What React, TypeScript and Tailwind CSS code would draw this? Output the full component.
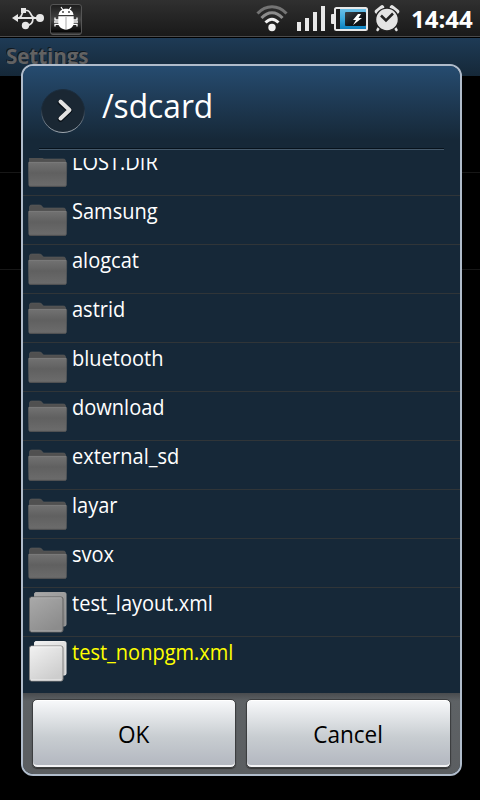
const folders = ['LOST.DIR', 'Samsung', 'alogcat', 'astrid', 'bluetooth', 'download', 'external_sd', 'layar', 'svox'];

function UsbIcon() {
  return (
    <svg width="34" height="24" viewBox="0 0 34 24" fill="none" stroke="#e6e6e6" strokeWidth="1.7">
      <path d="M5 12H29" strokeWidth="2" />
      <path d="M7.500 12C12 12 10 4.500 14 4.500M15 19.500C19.500 19.500 22 17 22 12M13 4.500H16C20.500 4.500 19 12 24.500 12" />
      <path d="M1 12L7 8V16Z" fill="#e6e6e6" stroke="none" />
      <rect x="10" y="2" width="5" height="5" fill="#e6e6e6" stroke="none" />
      <circle cx="14.500" cy="19.500" r="3.700" fill="#e6e6e6" stroke="none" />
      <circle cx="29" cy="12" r="4" fill="#e6e6e6" stroke="none" />
    </svg>
  );
}

function BugIcon() {
  return (
    <svg width="32" height="31" viewBox="0 0 32 31">
      <defs>
        <linearGradient id="bug" x1="0" y1="0" x2="0" y2="1">
          <stop offset="0" stopColor="#1c1c1c" />
          <stop offset=".5" stopColor="#444" />
          <stop offset=".9" stopColor="#080808" />
          <stop offset="1" stopColor="#555" />
        </linearGradient>
      </defs>
      <rect x=".5" y=".5" width="31" height="30" rx="2.500" fill="url(#bug)" stroke="#555" />
      <path d="M11 3L13 6M21 3L19 6" stroke="#fff" strokeWidth="1.200" />
      <path d="M8.500 11C9 2.500 23 2.500 23.500 11Z" fill="#fff" />
      <circle cx="13" cy="8" r=".9" fill="#333" />
      <circle cx="19" cy="8" r=".9" fill="#333" />
      <path d="M8.300 12.300H23.700V19C23.700 23 20 25.500 16 25.500C12 25.500 8.300 23 8.300 19Z" fill="#fff" />
      <path d="M16 13V25.500" stroke="#bbb" strokeWidth="1.300" />
      <path d="M9 16H5V13.500M9 18H4M9 20.300H5V22.500M23 16H27V13.500M23 18H28M23 20.300H27V22.500" stroke="#fff" strokeWidth="1.300" fill="none" />
    </svg>
  );
}

function WifiIcon() {
  return (
    <svg width="32" height="28" viewBox="0 0 32 28" fill="none" strokeWidth="3">
      <path d="M1.500 9.500C10 .5 22 .5 30.500 9.500" stroke="#747474" />
      <path d="M5.500 14C12 7 20 7 26.500 14" stroke="#8c8c8c" />
      <path d="M9.500 18.500C14 14 18 14 22.500 18.500" stroke="#f0f0f0" />
      <circle cx="16" cy="23.500" r="3.700" fill="#f0f0f0" />
    </svg>
  );
}

function SignalIcon() {
  return (
    <svg width="29" height="26" viewBox="0 0 29 26" fill="#e8e8e8">
      <path d="M0 17H4V26H0ZM8 13H12V26H8ZM16 7H20V26H16ZM24 1H28V26H24Z" />
    </svg>
  );
}

function BatteryIcon() {
  return (
    <svg width="37" height="26" viewBox="0 0 37 26">
      <defs>
        <linearGradient id="charge" x1="0" y1="0" x2="0" y2="1">
          <stop offset="0" stopColor="#6cc0e8" />
          <stop offset=".5" stopColor="#3aa8dc" />
          <stop offset="1" stopColor="#0a80c0" />
        </linearGradient>
        <linearGradient id="cell" x1="0" y1="0" x2="1" y2="1">
          <stop offset="0" stopColor="#3a4248" />
          <stop offset=".6" stopColor="#101418" />
        </linearGradient>
      </defs>
      <rect x="0" y="8" width="4" height="10" rx="1" fill="#e8e8e8" />
      <rect x="4" y="2" width="32" height="22" rx="1.500" fill="#1c1c1c" stroke="#e8e8e8" strokeWidth="2" />
      <rect x="9" y="3" width="26" height="20" fill="url(#charge)" />
      <rect x="14" y="6" width="21" height="14" rx="1" fill="url(#cell)" />
      <path d="M27 8L22 14H25L22 19L31 12H27.500L30 8Z" fill="#fff" />
    </svg>
  );
}

function AlarmIcon() {
  return (
    <svg width="26" height="28" viewBox="0 0 26 28" fill="none">
      <path d="M3 7.500L8 3.500M23 7.500L18 3.500" stroke="#e4e4e4" strokeWidth="4.500" strokeLinecap="round" />
      <path d="M6 22L3.500 26M20 22L22.500 26" stroke="#e4e4e4" strokeWidth="2.500" strokeLinecap="round" />
      <circle cx="13" cy="15.500" r="11.400" fill="#e4e4e4" stroke="#222" strokeWidth="1.300" />
      <path d="M7 11.500L12 16.500L19 9.500" stroke="#222" strokeWidth="2.500" />
    </svg>
  );
}

function FolderIcon() {
  return (
    <svg className="block" width="40" height="34" viewBox="0 0 40 34">
      <defs>
        <linearGradient id="folder" x1="0" y1="0" x2="0" y2="1">
          <stop offset="0" stopColor="#727272" />
          <stop offset=".45" stopColor="#606060" />
          <stop offset="1" stopColor="#6c6c6c" />
        </linearGradient>
      </defs>
      <path d="M1.500 10V3Q1.500 1 3.500 1H11.500Q13.500 1 14.500 3L15.500 4H35.500Q37.500 4 37.500 6V10Z" fill="#505050" stroke="#5d5d5d" strokeWidth=".6" />
      <path d="M.3 8Q.3 7 1.300 7H37.700Q38.700 7 38.700 8L38.400 30Q38.300 31.500 36.700 31.500H2.500Q.9 31.500 .8 30Z" fill="url(#folder)" stroke="#5c5c5c" strokeWidth=".6" />
      <path d="M1 7.500H38" stroke="#808080" strokeWidth=".7" />
      <path d="M2 31.300H37.500" stroke="#505050" strokeWidth=".7" />
    </svg>
  );
}

function FileIcon({ bright }: { bright?: boolean }) {
  const id = bright ? 'pageBright' : 'pageDim';
  return (
    <svg className="block" width="40" height="42" viewBox="0 0 40 42">
      <defs>
        <linearGradient id={id} x1="0" y1="0" x2=".6" y2="1">
          <stop offset="0" stopColor={bright ? '#f2f2f2' : '#aaa'} />
          <stop offset="1" stopColor={bright ? '#cdcdcd' : '#8c8c8c'} />
        </linearGradient>
      </defs>
      <rect x="6.500" y=".5" width="31.500" height="33.500" rx="1.500" fill={`url(#${id})`} stroke={bright ? '#ededed' : '#a0a0a0'} strokeWidth="1" />
      <rect x="1.500" y="5" width="33.500" height="35" rx="2" fill={`url(#${id})`} stroke={bright ? '#808080' : '#606060'} strokeWidth="1" />
      <path d="M3 5.800H33.500" stroke={bright ? '#fff' : '#b8b8b8'} strokeWidth=".8" />
      <path d="M3 39H33.500" stroke={bright ? '#eee' : '#aaa'} />
    </svg>
  );
}

function Row({ name, kind }: { name: string; kind: 'folder' | 'file' | 'selected' }) {
  const folder = kind === 'folder';
  return (
    <li className={`flex h-[49px] shrink-0 items-start pl-[5px] ${kind === 'selected' ? '' : 'border-b border-[#303538]'}`}>
      <div className={`w-11 shrink-0 ${folder ? 'pt-2' : 'pt-1'}`}>
        {folder ? <FolderIcon /> : <FileIcon bright={kind === 'selected'} />}
      </div>
      <span className={`inline-block origin-left scale-x-[.91] text-[22px] leading-7 ${kind === 'selected' ? 'text-[#ffff00]' : 'text-white'}`}>{name}</span>
    </li>
  );
}

function DialogButton({ label, width }: { label: string; width: string }) {
  return (
    <button className={`flex h-[69px] ${width} items-center justify-center rounded-[5px] border border-[#3c3e40] bg-linear-to-b from-[#f8f9fb] via-[#c8cdd1] via-55% to-[#b2b6bf] pt-px pr-px text-[24px] text-black shadow-[inset_0_-2px_0_#f2f2f4,inset_0_1px_0_#fff,0_1px_1px_#333]`}>
      <span className="inline-block scale-x-[.94]">{label}</span>
    </button>
  );
}

export default function App() {
  return (
    <div className="relative h-[800px] w-[480px] overflow-hidden bg-black font-['Open_Sans','Noto_Sans',sans-serif]">
      <header className="flex h-[38px] items-start border-b border-black bg-linear-to-b from-[#303030] to-[#191919] pl-[11px] shadow-[inset_0_-1px_0_#4a4a4a]">
        <div className="mt-[6px]"><UsbIcon /></div>
        <div className="mt-[4px] ml-[5px]"><BugIcon /></div>
        <div className="mt-[4px] ml-[174px]"><WifiIcon /></div>
        <div className="mt-[5px] ml-[9px]"><SignalIcon /></div>
        <div className="mt-[6px] ml-[5px]"><BatteryIcon /></div>
        <div className="mt-[4px] ml-[6px]"><AlarmIcon /></div>
        <time className="mt-[3px] ml-[11px] inline-block origin-left text-[24px] leading-8 font-bold text-white">14:44</time>
      </header>
      <div className="h-[38px] overflow-hidden bg-linear-to-b from-[#1e3b56] to-[#152838] pl-[6px]">
        <h1 className="inline-block origin-left scale-x-[.93] text-[22px] leading-[34px] font-bold text-[#626262] [text-shadow:-1px_-1px_0_#101820]">Settings</h1>
      </div>
      <div className="h-[97px] border-b border-[#171717]" />
      <div className="h-[97px] border-b border-[#171717]" />

      <section className="absolute top-[64px] left-[21px] flex h-[712px] w-[441px] flex-col overflow-hidden rounded-[12px] border-2 border-[#b0bccb] bg-[#162838]">
        <div className="h-[92px] shrink-0 bg-linear-to-b from-[#264c70] to-[#162838] to-80% px-4">
          <div className="flex h-[83px] items-start border-b border-[#07121c] pl-px">
            <svg className="mt-[22px]" width="46" height="46" viewBox="0 0 46 46">
              <defs>
                <linearGradient id="rim" x1="0" y1="0" x2="0" y2="1">
                  <stop offset=".45" stopColor="#1b2c3c" />
                  <stop offset="1" stopColor="#a0a8b0" />
                </linearGradient>
              </defs>
              <circle cx="23" cy="23" r="21.500" fill="#1a2733" stroke="url(#rim)" strokeWidth="1" />
              <path d="M20.500 14.500L29.500 22.500L20.500 31" fill="none" stroke="#080f16" strokeWidth="5.500" strokeLinecap="round" strokeLinejoin="round" />
              <path d="M20.500 13.500L29.500 22L20.500 30.500" fill="none" stroke="#e2e2e2" strokeWidth="4" strokeLinecap="round" strokeLinejoin="round" />
            </svg>
            <h2 className="mt-[16px] ml-4 inline-block origin-left scale-x-[.96] text-[33px] leading-[48px] text-white">/sdcard</h2>
          </div>
          <div className="h-px bg-[#45596b]" />
        </div>
        <ul className="flex h-[535px] shrink-0 flex-col justify-end overflow-hidden pb-[7px]">
          {folders.map((name) => <Row key={name} name={name} kind="folder" />)}
          <Row name="test_layout.xml" kind="file" />
          <Row name="test_nonpgm.xml" kind="selected" />
        </ul>
        <footer className="flex flex-1 items-start gap-[10px] bg-linear-to-b from-[#484b4e] via-[#5e6265] via-10% to-[#5b5e61] px-[9px] pt-[6px]">
          <DialogButton label="OK" width="w-[204px]" />
          <DialogButton label="Cancel" width="w-[205px]" />
        </footer>
      </section>
    </div>
  );
}
